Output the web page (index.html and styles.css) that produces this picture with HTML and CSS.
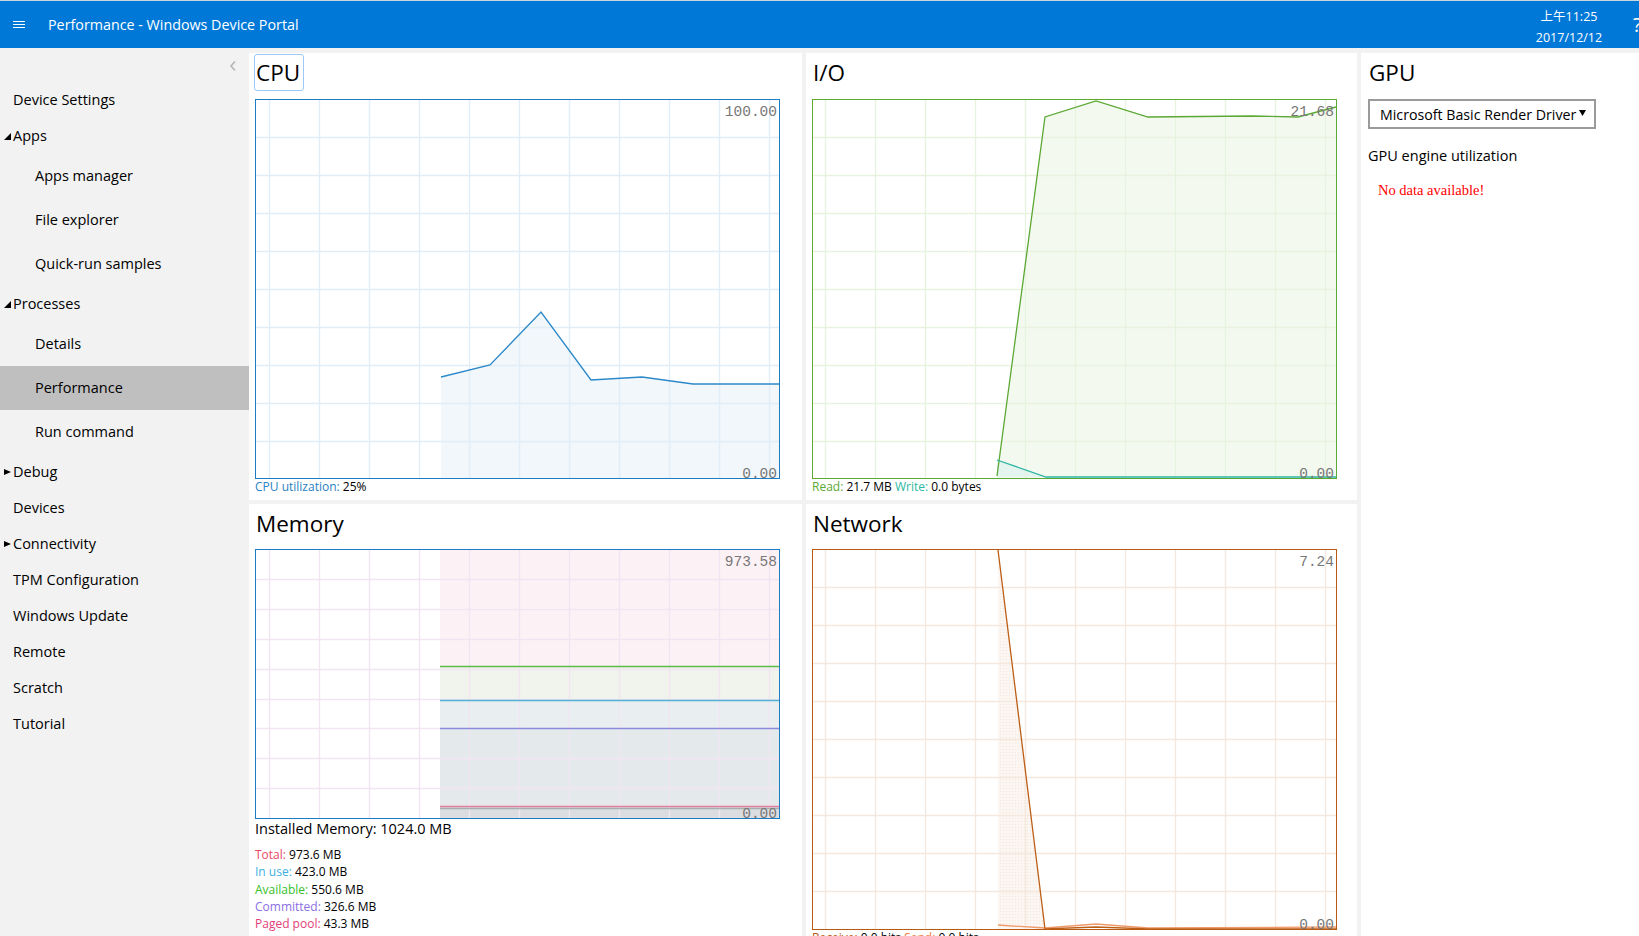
FILE: index.html
```html
<!DOCTYPE html>
<html lang="en">
<head>
<meta charset="utf-8">
<title>Performance - Windows Device Portal</title>
<link rel="stylesheet" href="styles.css">
</head>
<body>
<header class="topbar">
  <div class="menu-btn"><span></span><span></span><span></span></div>
  <div class="app-title">Performance - Windows Device Portal</div>
  <div class="spacer"></div>
  <div class="clock"><div>上午11:25</div><div>2017/12/12</div></div>
  <div class="help">?</div>
</header>
<div class="layout">
  <nav class="sidebar">
    <div class="collapse-row">
      <svg class="chevron" width="8" height="12" viewBox="0 0 8 12"><path d="M6 1.5 L2 6 L6 10.5" fill="none" stroke="#b4b4b4" stroke-width="1.6"/></svg>
    </div>
    <ul class="nav">
      <li class="nav-item top">Device Settings</li>
      <li class="nav-item top group open">Apps</li>
      <li class="nav-item sub">Apps manager</li>
      <li class="nav-item sub">File explorer</li>
      <li class="nav-item sub">Quick-run samples</li>
      <li class="nav-item top group open">Processes</li>
      <li class="nav-item sub">Details</li>
      <li class="nav-item sub active">Performance</li>
      <li class="nav-item sub">Run command</li>
      <li class="nav-item top group closed">Debug</li>
      <li class="nav-item top">Devices</li>
      <li class="nav-item top group closed">Connectivity</li>
      <li class="nav-item top">TPM Configuration</li>
      <li class="nav-item top">Windows Update</li>
      <li class="nav-item top">Remote</li>
      <li class="nav-item top">Scratch</li>
      <li class="nav-item top">Tutorial</li>
    </ul>
  </nav>

  <main class="content">
    <section class="panel panel-cpu">
      <h2 class="panel-title focused">CPU</h2>
      <div class="chart chart-cpu">
        <svg class="chart-svg" width="523" height="378" viewBox="0 0 523 378">
          <polygon points="185,277 234,265 285,212 335,280 386,277 437,284 523,284 523,378 185,378" fill="#f2f7fb"/>
          <g stroke="#e2eef7" stroke-width="1.4">
            <path d="M13.5 0V378M63.5 0V378M113.5 0V378M163.5 0V378M213.5 0V378M263.5 0V378M313.5 0V378M363.5 0V378M413.5 0V378M463.5 0V378M513.5 0V378"/>
            <path d="M0 37.5H523M0 75.5H523M0 113.5H523M0 151.5H523M0 189.5H523M0 227.5H523M0 265.5H523M0 303.5H523M0 341.5H523"/>
          </g>
          <polyline points="185,277 234,265 285,212 335,280 386,277 437,284 523,284" fill="none" stroke="#2c89c9" stroke-width="1.3"/>
        </svg>
        <span class="chart-max">100.00</span>
        <span class="chart-min">0.00</span>
      </div>
      <div class="legend"><span class="c-cpu">CPU utilization:</span> 25%</div>
    </section>

    <section class="panel panel-io">
      <h2 class="panel-title">I/O</h2>
      <div class="chart chart-io">
        <svg class="chart-svg" width="523" height="378" viewBox="0 0 523 378">
          <polygon points="184,376 232,17 283,1 335,17 438,16 485,17 523,7 523,378 184,378" fill="#f4f9f0"/>
          <polygon points="184,360 233,377 184,377" fill="#e4f4ef"/>
          <g stroke="#e7f2df" stroke-width="1.4">
            <path d="M12.5 0V378M62.5 0V378M112.5 0V378M162.5 0V378M212.5 0V378M262.5 0V378M312.5 0V378M362.5 0V378M412.5 0V378M462.5 0V378M512.5 0V378"/>
            <path d="M0 37.5H523M0 75.5H523M0 113.5H523M0 151.5H523M0 189.5H523M0 227.5H523M0 265.5H523M0 303.5H523M0 341.5H523"/>
          </g>
          <polyline points="184,376 232,17 283,1 335,17 438,16 485,17 523,7" fill="none" stroke="#5ba834" stroke-width="1.3"/>
          <polyline points="184,360 233,377 523,377" fill="none" stroke="#2bb7a1" stroke-width="1.3"/>
        </svg>
        <span class="chart-max">21.68</span>
        <span class="chart-min">0.00</span>
      </div>
      <div class="legend"><span class="c-read">Read:</span> 21.7 MB <span class="c-write">Write:</span> 0.0 bytes</div>
    </section>

    <section class="panel panel-gpu">
      <h2 class="panel-title">GPU</h2>
      <div class="fake-select">
        <span>Microsoft Basic Render Driver</span>
        <svg class="select-arrow" width="7" height="6" viewBox="0 0 7 6"><path d="M0 0H7L3.5 6Z" fill="#000"/></svg>
      </div>
      <div class="gpu-label">GPU engine utilization</div>
      <div class="no-data">No data available!</div>
    </section>

    <section class="panel panel-memory">
      <h2 class="panel-title">Memory</h2>
      <div class="chart chart-memory">
        <svg class="chart-svg" width="523" height="268" viewBox="0 0 523 268">
          <rect x="184" y="0" width="339" height="116" fill="#fcf2f5"/>
          <rect x="184" y="116" width="339" height="34" fill="#f1f3ed"/>
          <rect x="184" y="150" width="339" height="28" fill="#e9eef1"/>
          <rect x="184" y="178" width="339" height="78" fill="#e4e9ec"/>
          <rect x="184" y="256" width="339" height="12" fill="#dcdde1"/>
          <g stroke="#f1e5f1" stroke-width="1.4">
            <path d="M13.5 0V268M63.5 0V268M113.5 0V268M163.5 0V268M213.5 0V268M263.5 0V268M313.5 0V268M363.5 0V268M413.5 0V268M463.5 0V268M513.5 0V268"/>
            <path d="M0 29.5H523M0 59.5H523M0 89.5H523M0 119.5H523M0 149.5H523M0 178.5H523M0 208.5H523M0 238.5H523"/>
          </g>
          <path d="M184 116.5H523" stroke="#5dbb4a" stroke-width="1.3"/>
          <path d="M184 150.5H523" stroke="#52b2d6" stroke-width="1.3"/>
          <path d="M184 178.5H523" stroke="#8a8ade" stroke-width="1.3"/>
          <path d="M184 256.5H523" stroke="#e57d9c" stroke-width="1.6"/>
          <path d="M184 258.5H523" stroke="#a6aeae" stroke-width="1.3"/>
        </svg>
        <span class="chart-max">973.58</span>
        <span class="chart-min">0.00</span>
      </div>
      <div class="installed">Installed Memory: 1024.0 MB</div>
      <ul class="mem-stats">
        <li><span class="c-total">Total:</span> 973.6 MB</li>
        <li><span class="c-inuse">In use:</span> 423.0 MB</li>
        <li><span class="c-avail">Available:</span> 550.6 MB</li>
        <li><span class="c-commit">Committed:</span> 326.6 MB</li>
        <li><span class="c-paged">Paged pool:</span> 43.3 MB</li>
      </ul>
    </section>

    <section class="panel panel-network">
      <h2 class="panel-title">Network</h2>
      <div class="chart chart-network">
        <svg class="chart-svg" width="523" height="379" viewBox="0 0 523 379">
          <defs>
            <pattern id="stipple" width="3" height="3" patternUnits="userSpaceOnUse">
              <rect width="3" height="3" fill="#fbf6f2"/>
              <rect x="1" y="1" width="1" height="1" fill="#f3e6dc"/>
            </pattern>
          </defs>
          <polygon points="185,0 232,379 185,379" fill="url(#stipple)"/>
          <g stroke="#f5e8df" stroke-width="1.4">
            <path d="M12.5 0V379M62.5 0V379M112.5 0V379M162.5 0V379M212.5 0V379M262.5 0V379M312.5 0V379M362.5 0V379M412.5 0V379M462.5 0V379M512.5 0V379"/>
            <path d="M0 37.5H523M0 75.5H523M0 113.5H523M0 151.5H523M0 189.5H523M0 227.5H523M0 265.5H523M0 303.5H523M0 341.5H523"/>
          </g>
          <polyline points="185,375 232,378 283,374 335,378 523,377" fill="none" stroke="#ef9a6a" stroke-width="1.3"/>
          <polyline points="185,0 232,379 283,377 335,379 523,379" fill="none" stroke="#bd5e16" stroke-width="1.3"/>
        </svg>
        <span class="chart-max">7.24</span>
        <span class="chart-min">0.00</span>
      </div>
      <div class="legend"><span class="c-recv">Receive:</span> 0.0 bits <span class="c-send">Send:</span> 0.0 bits</div>
    </section>
  </main>
</div>
</body>
</html>
```

FILE: styles.css
```css
* { box-sizing: border-box; }

html, body {
  margin: 0;
  height: 100%;
  overflow: hidden;
}

body {
  background: #f2f2f2;
  color: #000;
  font-family: "Open Sans", "Noto Sans CJK SC", sans-serif;
  font-size: 14.5px;
}

/* ---------- top bar ---------- */
.topbar {
  height: 48px;
  background: #0078d7;
  border-top: 1px solid #cdd5dd;
  color: #fff;
  display: flex;
  align-items: center;
  overflow: hidden;
}

.menu-btn {
  width: 48px;
  height: 100%;
  padding-left: 13px;
  display: flex;
  flex-direction: column;
  justify-content: center;
  gap: 2px;
}
.menu-btn span {
  display: block;
  width: 12px;
  height: 1px;
  background: #fff;
}

.app-title {
  font-size: 14.3px;
  margin-top: -1px;
}

.spacer { flex: 1; }

.clock {
  width: 80px;
  text-align center;
  text-align: center;
  font-size: 12.5px;
  line-height: 21px;
  margin-top: 4px;
}

.help {
  margin-left: 24px;
  margin-right: -14px;
  font-size: 20px;
  width: 20px;
}

/* ---------- layout ---------- */
.layout {
  display: flex;
  height: calc(100% - 48px);
}

.sidebar {
  width: 249px;
  flex: none;
}

.collapse-row {
  height: 34px;
  display: flex;
  justify-content: flex-end;
  align-items: center;
  padding-right: 12px;
  padding-top: 2px;
}

.nav {
  list-style: none;
  margin: 0;
  padding: 0;
}

.nav-item {
  display: flex;
  align-items: center;
  white-space: nowrap;
}
.nav-item.top {
  height: 36px;
  padding-left: 13px;
  padding-bottom: 1px;
}
.nav-item.sub {
  height: 44px;
  padding-left: 35px;
  padding-bottom: 1px;
}
.nav-item.active {
  background: #bfbfbf;
}

.group::before {
  content: "";
  display: inline-block;
  width: 0;
  height: 0;
  margin-left: -9px;
  margin-right: 2px;
}
.group.open::before {
  border-left: 7px solid transparent;
  border-bottom: 7px solid #000;
  margin-top: 1px;
}
.group.closed::before {
  border-top: 3.5px solid transparent;
  border-bottom: 3.5px solid transparent;
  border-left: 7px solid #000;
  margin-right: 2px;
}

/* ---------- content grid ---------- */
.content {
  flex: 1;
  display: grid;
  grid-template-columns: 553px 551px 1fr;
  grid-template-rows: 447px 1fr;
  gap: 4px;
  padding-top: 5px;
  min-width: 0;
}

.panel {
  background: #fff;
  padding: 0 6px;
  overflow: hidden;
  min-height: 0;
}

.panel-gpu {
  grid-column: 3;
  grid-row: 1 / span 2;
  padding-left: 7px;
}
.panel-memory { grid-column: 1; grid-row: 2; }
.panel-network { grid-column: 2; grid-row: 2; }

.panel-title {
  width: fit-content;
  height: 37px;
  margin: 1px 0 8px -1px;
  padding: 0 1px;
  font-size: 22.5px;
  font-weight: 400;
  line-height: 35px;
  border: 1px solid transparent;
  border-radius: 3px;
}
.panel-title.focused {
  border-color: #9ec8f6;
  padding-right: 3px;
}

/* ---------- charts ---------- */
.chart {
  position: relative;
  width: 525px;
  height: 380px;
  border: 1px solid;
}
.chart-svg { display: block; }

.chart-cpu { border-color: #1e7dc2; }
.chart-io { border-color: #5ba834; }
.chart-memory { border-color: #1e7dc2; height: 270px; margin-top: -1px; }
.chart-network { border-color: #b95a14; height: 381px; margin-top: -1px; }

.chart-max,
.chart-min {
  position: absolute;
  right: 2px;
  font-family: "Liberation Mono", monospace;
  font-size: 14.5px;
  line-height: 16px;
  color: #777;
}
.chart-max { top: 4px; }
.chart-min { bottom: -4px; }

.legend {
  font-size: 12px;
  line-height: 16px;
  margin-top: 0;
  white-space: nowrap;
}

.c-cpu { color: #2a82c4; }
.c-read { color: #5ba834; }
.c-write { color: #2bb7a1; }
.c-recv { color: #b95a14; }
.c-send { color: #ef7f3f; }

.installed {
  font-size: 14.5px;
  line-height: 20px;
}

.mem-stats {
  list-style: none;
  margin: 7px 0 0;
  padding: 0;
  font-size: 12px;
  line-height: 17.3px;
}
.c-total { color: #ec4863; }
.c-inuse { color: #40afe0; }
.c-avail { color: #36c02a; }
.c-commit { color: #8a6ee2; }
.c-paged { color: #e23e78; }

/* ---------- GPU ---------- */
.fake-select {
  width: 228px;
  height: 30px;
  margin-top: 4px;
  border: 2px solid #9a9a9a;
  display: flex;
  align-items: center;
  justify-content: space-between;
  padding: 0 8px 0 10px;
  font-size: 14.2px;
  white-space: nowrap;
}
.select-arrow {
  flex: none;
  margin-top: -2px;
}

.gpu-label {
  margin-top: 17px;
  line-height: 20px;
}

.no-data {
  margin-top: 14px;
  padding-left: 10px;
  line-height: 20px;
  font-family: "Liberation Serif", serif;
  font-size: 14.5px;
  color: #f00;
}
```
